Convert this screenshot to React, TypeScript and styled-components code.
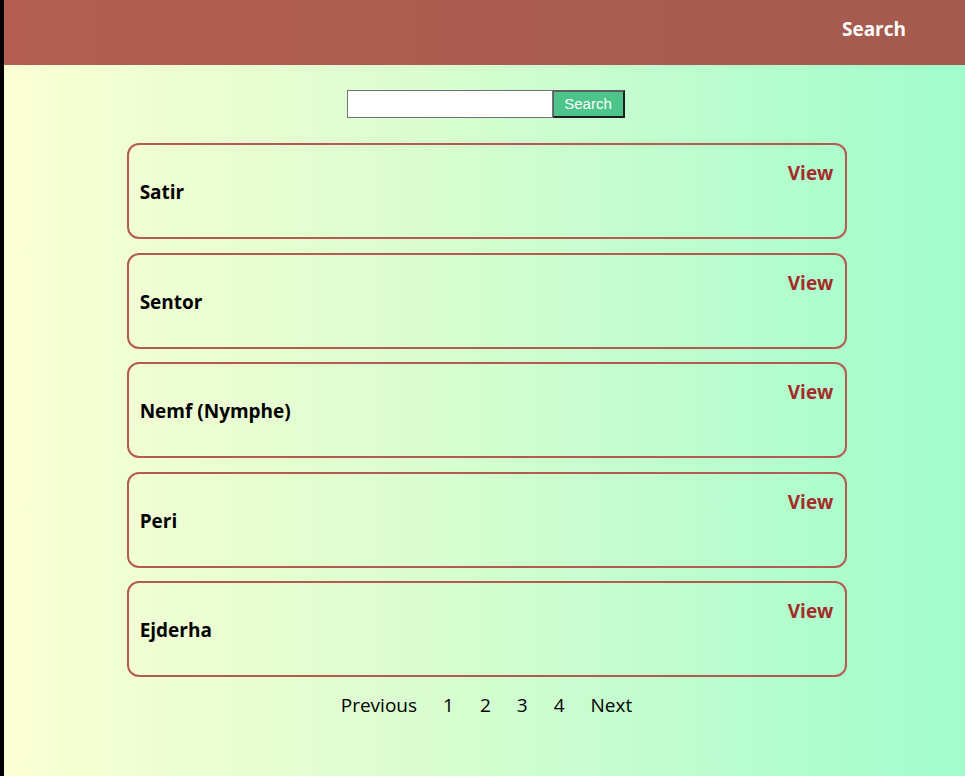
import React from "react";
import styled, { createGlobalStyle } from "styled-components";

const Global = createGlobalStyle`
  html, body { margin: 0; padding: 0; background: #000; }
  body { font-family: "Open Sans", "Noto Sans", sans-serif; }
  #root { min-height: 776px; }
`;

const Shell = styled.div`
  margin-left: 4px;
  min-height: 776px;
  background: linear-gradient(to right, #fbffd4 0%, #d8fdd0 45%, #a0fdcb 100%);
  display: flex;
  flex-direction: column;
`;

const Header = styled.header`
  height: 65px;
  background: linear-gradient(to right, #b45c51, #a35b4e);
  display: flex;
  align-items: center;
  justify-content: flex-end;
  padding-right: 59px;
`;

const HeaderLink = styled.span`
  color: #fff;
  font-weight: 700;
  font-size: 19px;
  margin-top: -8px;
`;

const Main = styled.main`
  display: flex;
  flex-direction: column;
  align-items: center;
  padding-top: 25px;
`;

const SearchForm = styled.form`
  display: flex;
  height: 28px;
  margin-left: 2px;
  margin-bottom: 25px;
`;

const Input = styled.input`
  width: 206px;
  height: 28px;
  box-sizing: border-box;
  border: 1px solid #6f7478;
  background: #fff;
  padding: 0 4px;
  margin: 0;
`;

const Button = styled.button`
  height: 28px;
  width: 72px;
  box-sizing: border-box;
  background: #4dc489;
  color: #fff;
  font-family: "Liberation Sans", Arial, sans-serif;
  font-size: 15px;
  border: 2px solid;
  border-color: #5a6060 #1e1e1e #1e1e1e #5a6060;
  border-left-width: 1px;
  padding: 0 0 2px;
  margin: 0;
`;

const List = styled.div`
  width: 75%;
  margin-left: 5px;
  display: flex;
  flex-direction: column;
  gap: 13.5px;
`;

const Card = styled.div`
  height: 96px;
  box-sizing: border-box;
  border: 2px solid #b35b50;
  border-radius: 12px;
  padding: 2px 12px 0 11px;
  display: flex;
  align-items: center;
  justify-content: space-between;
`;

const Title = styled.h3`
  margin: 0;
  font-size: 19px;
  font-weight: 700;
  color: #000;
`;

const ViewLink = styled.a`
  align-self: flex-start;
  margin-top: 14px;
  color: #a52a2a;
  font-weight: 700;
  font-size: 19px;
  line-height: 24px;
  text-decoration: none;
`;

const Pager = styled.nav`
  display: flex;
  gap: 26px;
  margin-top: 15px;
  margin-left: 4px;
  font-size: 19px;
  color: #000;
`;

const PageItem = styled.span`
  cursor: pointer;
`;

const items = ["Satir", "Sentor", "Nemf (Nymphe)", "Peri", "Ejderha"];

export default function App() {
  return (
    <>
      <Global />
      <Shell>
        <Header>
          <HeaderLink>Search</HeaderLink>
        </Header>
        <Main>
          <SearchForm onSubmit={(e) => e.preventDefault()}>
            <Input type="text" />
            <Button type="submit">Search</Button>
          </SearchForm>
          <List>
            {items.map((t) => (
              <Card key={t}>
                <Title>{t}</Title>
                <ViewLink href="#">View</ViewLink>
              </Card>
            ))}
          </List>
          <Pager>
            {["Previous", "1", "2", "3", "4", "Next"].map((p) => (
              <PageItem key={p}>{p}</PageItem>
            ))}
          </Pager>
        </Main>
      </Shell>
    </>
  );
}
